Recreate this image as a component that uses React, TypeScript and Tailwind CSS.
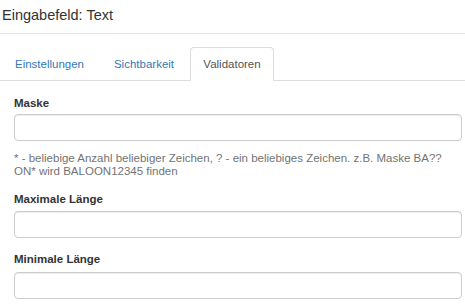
import React from "react";

export default function App() {
  const font = { fontFamily: '"Liberation Sans", Arial, sans-serif' };
  return (
    <div className="w-[465px] h-[307px] bg-white overflow-hidden text-[#333]" style={font}>
      <div className="h-[34px] border-b border-[#e5e5e5] pl-[2px] pt-[4.5px]">
        <div className="text-[14.5px] leading-[20px] text-[#333]">Eingabefeld: Text</div>
      </div>
      <div className="mt-[13px] flex border-b border-[#dddddd] h-[34px] text-[11.5px]">
        <div className="w-[93px] ml-[3px] h-[34px] text-center pt-[9px] leading-[16px] text-[#337ab7]">Einstellungen</div>
        <div className="w-[84px] ml-[6px] h-[34px] text-center pt-[9px] leading-[16px] text-[#337ab7]">Sichtbarkeit</div>
        <div className="w-[84px] ml-[4px] h-[34px] text-center pt-[8px] leading-[16px] text-[#555] bg-white border border-b-0 border-[#dddddd] rounded-t-[4px]">Validatoren</div>
      </div>
      <div className="pl-[14px] pr-[3px]">
        <div className="mt-[14px] mb-[3px] text-[11.5px] leading-[16px] font-bold text-[#333]">Maske</div>
        <div className="h-[27px] border border-[#cccccc] rounded-[4px] shadow-[inset_0_1px_1px_rgba(0,0,0,0.075)]" />
        <div className="mt-[10.5px] text-[11.5px] leading-[13.5px] text-[#737373]">
          <div className="whitespace-nowrap">* - beliebige Anzahl beliebiger Zeichen, ? - ein beliebiges Zeichen. z.B. Maske BA??</div>
          <div className="whitespace-nowrap">ON* wird BALOON12345 finden</div>
        </div>
        <div className="mt-[12px] mb-[4.5px] text-[11.5px] leading-[16px] font-bold text-[#333]">Maximale Länge</div>
        <div className="h-[27px] border border-[#cccccc] rounded-[4px] shadow-[inset_0_1px_1px_rgba(0,0,0,0.075)]" />
        <div className="mt-[13px] mb-[4.5px] text-[11.5px] leading-[16px] font-bold text-[#333]">Minimale Länge</div>
        <div className="h-[27px] border border-[#cccccc] rounded-[4px] shadow-[inset_0_1px_1px_rgba(0,0,0,0.075)]" />
      </div>
    </div>
  );
}
